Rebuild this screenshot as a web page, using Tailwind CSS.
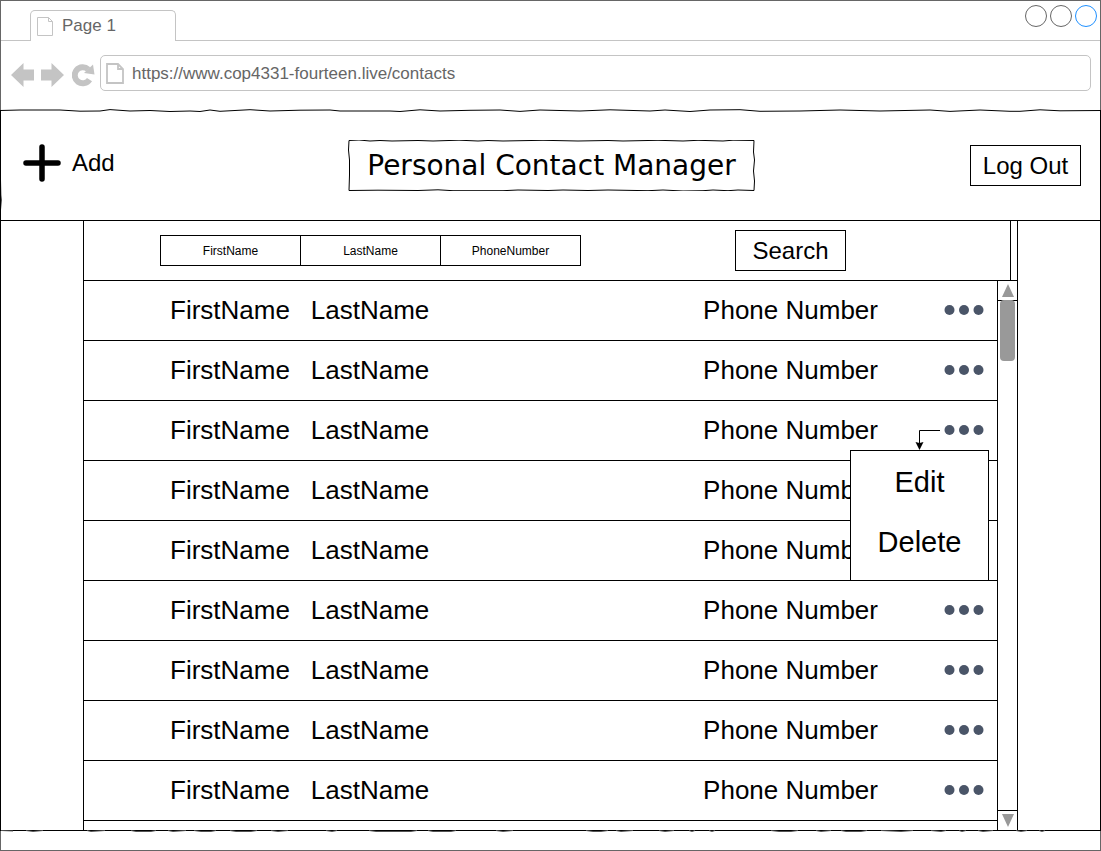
<!DOCTYPE html>
<html lang="en">
<head>
<meta charset="utf-8">
<meta name="viewport" content="width=device-width, initial-scale=1">
<title>Personal Contact Manager</title>
<script src="https://cdn.jsdelivr.net/npm/@tailwindcss/browser@4"></script>
</head>
<body class="bg-white font-['Liberation_Sans',Arial,sans-serif] text-black">
<div class="flex min-h-screen flex-col border border-[#666]">

  <!-- Browser chrome -->
  <div class="flex h-10 items-end justify-between border-b border-[#c4c4c4] pl-[29px] pr-[3px]">
    <div class="-mb-px flex h-[31px] w-[146px] items-center gap-2 rounded-t-[5px] border border-b-0 border-[#c4c4c4] bg-white pl-[6px] text-[17px] text-[#666]">
      <svg class="h-[19px] w-[17px]" viewBox="0 0 17 19" fill="none" stroke="#c4c4c4"><path d="M.5.5H11.5L15.500 4.500V18.5H.5ZM11.5.5V4.500H15.500"/></svg>
      <span>Page 1</span>
    </div>
    <div class="flex gap-[3px] self-start pt-1">
      <button aria-label="Minimize" class="size-[22px] rounded-full border border-[#666]"></button>
      <button aria-label="Maximize" class="size-[22px] rounded-full border border-[#666]"></button>
      <button aria-label="Close" class="size-[22px] rounded-full border border-[#1e90ff]"></button>
    </div>
  </div>
  <div class="flex h-[69px] items-start pl-[10px] pr-[9px] pt-[14px]">
    <div class="flex h-9 items-center pt-1">
      <button aria-label="Back" class="w-[30px]"><svg class="h-6 w-[23px]" viewBox="0 0 23 24"><path fill="#c4c4c4" d="M0 12L12.500 0V6.500H23V17.500H12.500V24Z"/></svg></button>
      <button aria-label="Forward" class="w-[30px]"><svg class="h-6 w-[23px]" viewBox="0 0 23 24"><path fill="#c4c4c4" d="M23 12L10.500 0V6.500H0V17.500H10.500V24Z"/></svg></button>
      <button aria-label="Reload" class="w-[29px] pl-px"><svg class="h-6 w-[23px]" viewBox="0 0 23 24"><path fill="none" stroke="#c4c4c4" stroke-width="6" d="M17.500 16.600A8 8 0 1 1 16.200 6.400"/><path fill="#c4c4c4" d="M21 1.500L22.500 11.500L12 10Z"/></svg></button>
    </div>
    <label class="flex h-9 flex-1 items-center gap-2 rounded-[5px] border border-[#c4c4c4] pl-[5px]">
      <svg class="h-[21px] w-[18px]" viewBox="0 0 18 21" fill="none" stroke="#c4c4c4" stroke-width="1.800"><path d="M1 1H12L17 6V20H1ZM12 1V6H17"/></svg>
      <input aria-label="Address" class="min-w-0 flex-1 pt-[2px] text-[17px] text-[#666] outline-none" value="https://www.cop4331-fourteen.live/contacts">
    </label>
  </div>

  <main class="relative -mx-px mb-[19px] flex flex-1 flex-col border-x border-b border-black">
    <!-- Hand-drawn edges -->
    <svg class="pointer-events-none absolute -left-px -top-[2px] h-[6px] w-[calc(100%+2px)]" viewBox="0 0 1101 6" preserveAspectRatio="none" fill="none" stroke="#000"><path d="M0 2.500L20 2 60 2 80 3.200 100 3 110 1.600 130 3 150 2.500 170 3.500 190 3 200 3.500 210 2 220 3.300 250 1.700 270 3 300 2.200 330 2 340 3 390 3 400 3.500 420 1.800 440 3 470 2.300 500 2 520 3.400 540 2 580 3 610 1.800 650 3 665 2 690 3.500 710 2 740 1.700 760 3.300 800 3 840 2 880 3 930 2 950 3.400 980 2 1010 3.300 1020 3.300 1040 1.800 1060 2.800 1101 2.500"/></svg>
    <svg class="pointer-events-none absolute -bottom-[3px] left-0 h-[3px] w-full" viewBox="0 0 1099 3" preserveAspectRatio="none" fill="none" stroke="#555"><path d="M0 .5L12 1M25 .5L32 1.500 42 .5M86 .5L90 1.500 104 .5M130 .5L135 1.500H150L155 .5M167 .5L172 1.500 185 .5M193 .5L200 1.500H210L215 .5M229 .5L235 1.500H250L256 .5M270 .5L277 1.500 287 .5M325 .5L331 1.500 336 .5M368 .5L375 1.500H410L416 .5M427 .5L432 1.500H450L455 .5M495 .5L502 1.500 512 .5M585 .5L592 1.500H600L607 .5M615 .5L620 1.500 632 .5M658 .5L664 1.500 673 .5M688 .5L691 1.500 694 .5M708 .5L711 1.500 714 .5M770 .5L778 1.500H790L797 .5M815 .5L820 1.500 830 .5M840 .5L845 1.500H860L866 .5M880 .5L900 1.500 912 .5M930 .5L940 1.500 945 .5M958 .5L961 1.500 965 .5M977 .5L982 1.500 992 .5M1015 .5L1020 1.500 1026 .5M1038 .5L1041 1.500 1044 .5"/></svg>
    <svg class="pointer-events-none absolute -left-px top-0 h-[110px] w-[3px]" viewBox="0 0 3 110" fill="none" stroke="#000"><path d="M.5 0V70L.8 85 1.200 90 .5 100V110"/></svg>

    <header class="flex h-[111px] items-start justify-between border-b border-black px-[19px]">
      <div class="flex flex-1 pl-[2px] pt-8">
        <button class="flex items-center gap-[11px] text-2xl leading-[42px]">
          <svg class="h-10 w-[39px]" viewBox="0 0 39 40" stroke="#000" stroke-width="5.500" stroke-linecap="round"><path d="M20 4V36M4 20H36"/></svg>
          <span>Add</span>
        </button>
      </div>
      <div class="relative mt-[30px] flex h-[51px] w-[407px] items-center justify-center pt-px">
        <svg class="absolute inset-0 size-full" viewBox="0 0 407 51" fill="none" stroke="#000"><path d="M1 .5L11 0 22 1 32 .5 44 1 70 .5 85 1 111 .2 130 1 140 .5 155 1 195 .3 230 1 260 .5 275 1 310 .3 335 1 350 .3 375 1 385 .2 406 .5L405.500 12 406.500 20 405.500 31 406.500 41 406 50.500 390 50 380 50.700 365 50 355 50.700 335 51 315 50 300 50.700 260 50 240 50.500 215 50 200 50.500 170 50 155 50.700 105 50.700 90 49.800 70 50.500 30 50.200 1 50.500L1.500 35 1.500 20 .5 10Z"/></svg>
        <h1 class="relative font-['DejaVu_Sans',Verdana,sans-serif] text-[28px] leading-9">Personal Contact Manager</h1>
      </div>
      <div class="flex flex-1 justify-end pt-[35px]">
        <button class="h-[41px] w-[111px] border border-black text-2xl">Log Out</button>
      </div>
    </header>

    <div class="flex flex-1 px-[82px]">
      <section class="flex flex-1 flex-col border-x border-black">
        <form class="mr-[6px] flex h-[60px] items-start border-b border-r border-black pl-[76px]">
          <div class="mt-[14px] flex h-[31px] border border-black text-xs">
            <input aria-label="First name" placeholder="FirstName" class="w-[140px] border-r border-black text-center outline-none placeholder:text-black">
            <input aria-label="Last name" placeholder="LastName" class="w-[140px] border-r border-black text-center outline-none placeholder:text-black">
            <input aria-label="Phone number" placeholder="PhoneNumber" class="w-[139px] text-center outline-none placeholder:text-black">
          </div>
          <button type="button" class="ml-auto mr-[164px] mt-[9px] h-[41px] w-[111px] border border-black text-2xl">Search</button>
        </form>

        <div class="flex flex-1">
          <table class="w-full flex-1 table-fixed border-separate border-spacing-0 self-start text-[26px] leading-[59px]">
            <colgroup><col class="w-[216px]"><col class="w-[140px]"><col><col class="w-[66px]"></colgroup>
            <tbody id="rows"></tbody>
          </table>
          <div class="-mt-px flex w-5 flex-col border-l border-t border-black">
            <button aria-label="Scroll up" class="flex h-5 items-center justify-center border-b border-black"><svg class="h-[13px] w-3" viewBox="0 0 12 13"><path fill="#999" d="M6 0L12 13H0Z"/></svg></button>
            <div class="relative flex-1"><div class="absolute inset-x-[2px] -top-px h-[61px] rounded-[4px] bg-[#999]"></div></div>
            <button aria-label="Scroll down" class="flex h-5 items-center justify-center border-t border-black"><svg class="h-[13px] w-3" viewBox="0 0 12 13"><path fill="#999" d="M0 0H12L6 13Z"/></svg></button>
          </div>
        </div>
      </section>
    </div>
  </main>
</div>

<template id="row">
  <tr>
    <td class="border-b border-black p-0 pl-[76px] text-center">FirstName</td>
    <td class="border-b border-black p-0 text-center">LastName</td>
    <td class="border-b border-black p-0 pr-[53px] text-right">Phone Number</td>
    <td class="border-b border-black p-0">
      <div class="relative flex h-[59px] items-center justify-center pb-[2px]">
        <button aria-label="Contact actions"><svg class="block h-[10px] w-10" viewBox="0 0 40 10" fill="#4a5568"><circle cx="5.500" cy="5" r="5"/><circle cx="20" cy="5" r="5"/><circle cx="34.500" cy="5" r="5"/></svg></button>
      </div>
    </td>
  </tr>
</template>
<template id="menu">
  <svg class="absolute -left-[16px] top-[29px] h-5 w-[26px]" viewBox="0 0 26 20"><path fill="none" stroke="#000" d="M25 .5H4.500V14"/><path d="M4.500 20L.5 12L4.500 13L8.500 12Z"/></svg>
  <div class="absolute right-2 top-[49px] z-10 flex h-[131px] w-[139px] flex-col border border-black bg-white pt-px text-[29px] leading-[60px]">
    <button>Edit</button>
    <button>Delete</button>
  </div>
</template>
<script>
  const rows = document.getElementById('rows');
  const row = document.getElementById('row');
  for (let i = 0; i < 9; i++) rows.append(row.content.cloneNode(true));
  rows.rows[2].querySelector('div').append(document.getElementById('menu').content.cloneNode(true));
</script>
</body>
</html>
